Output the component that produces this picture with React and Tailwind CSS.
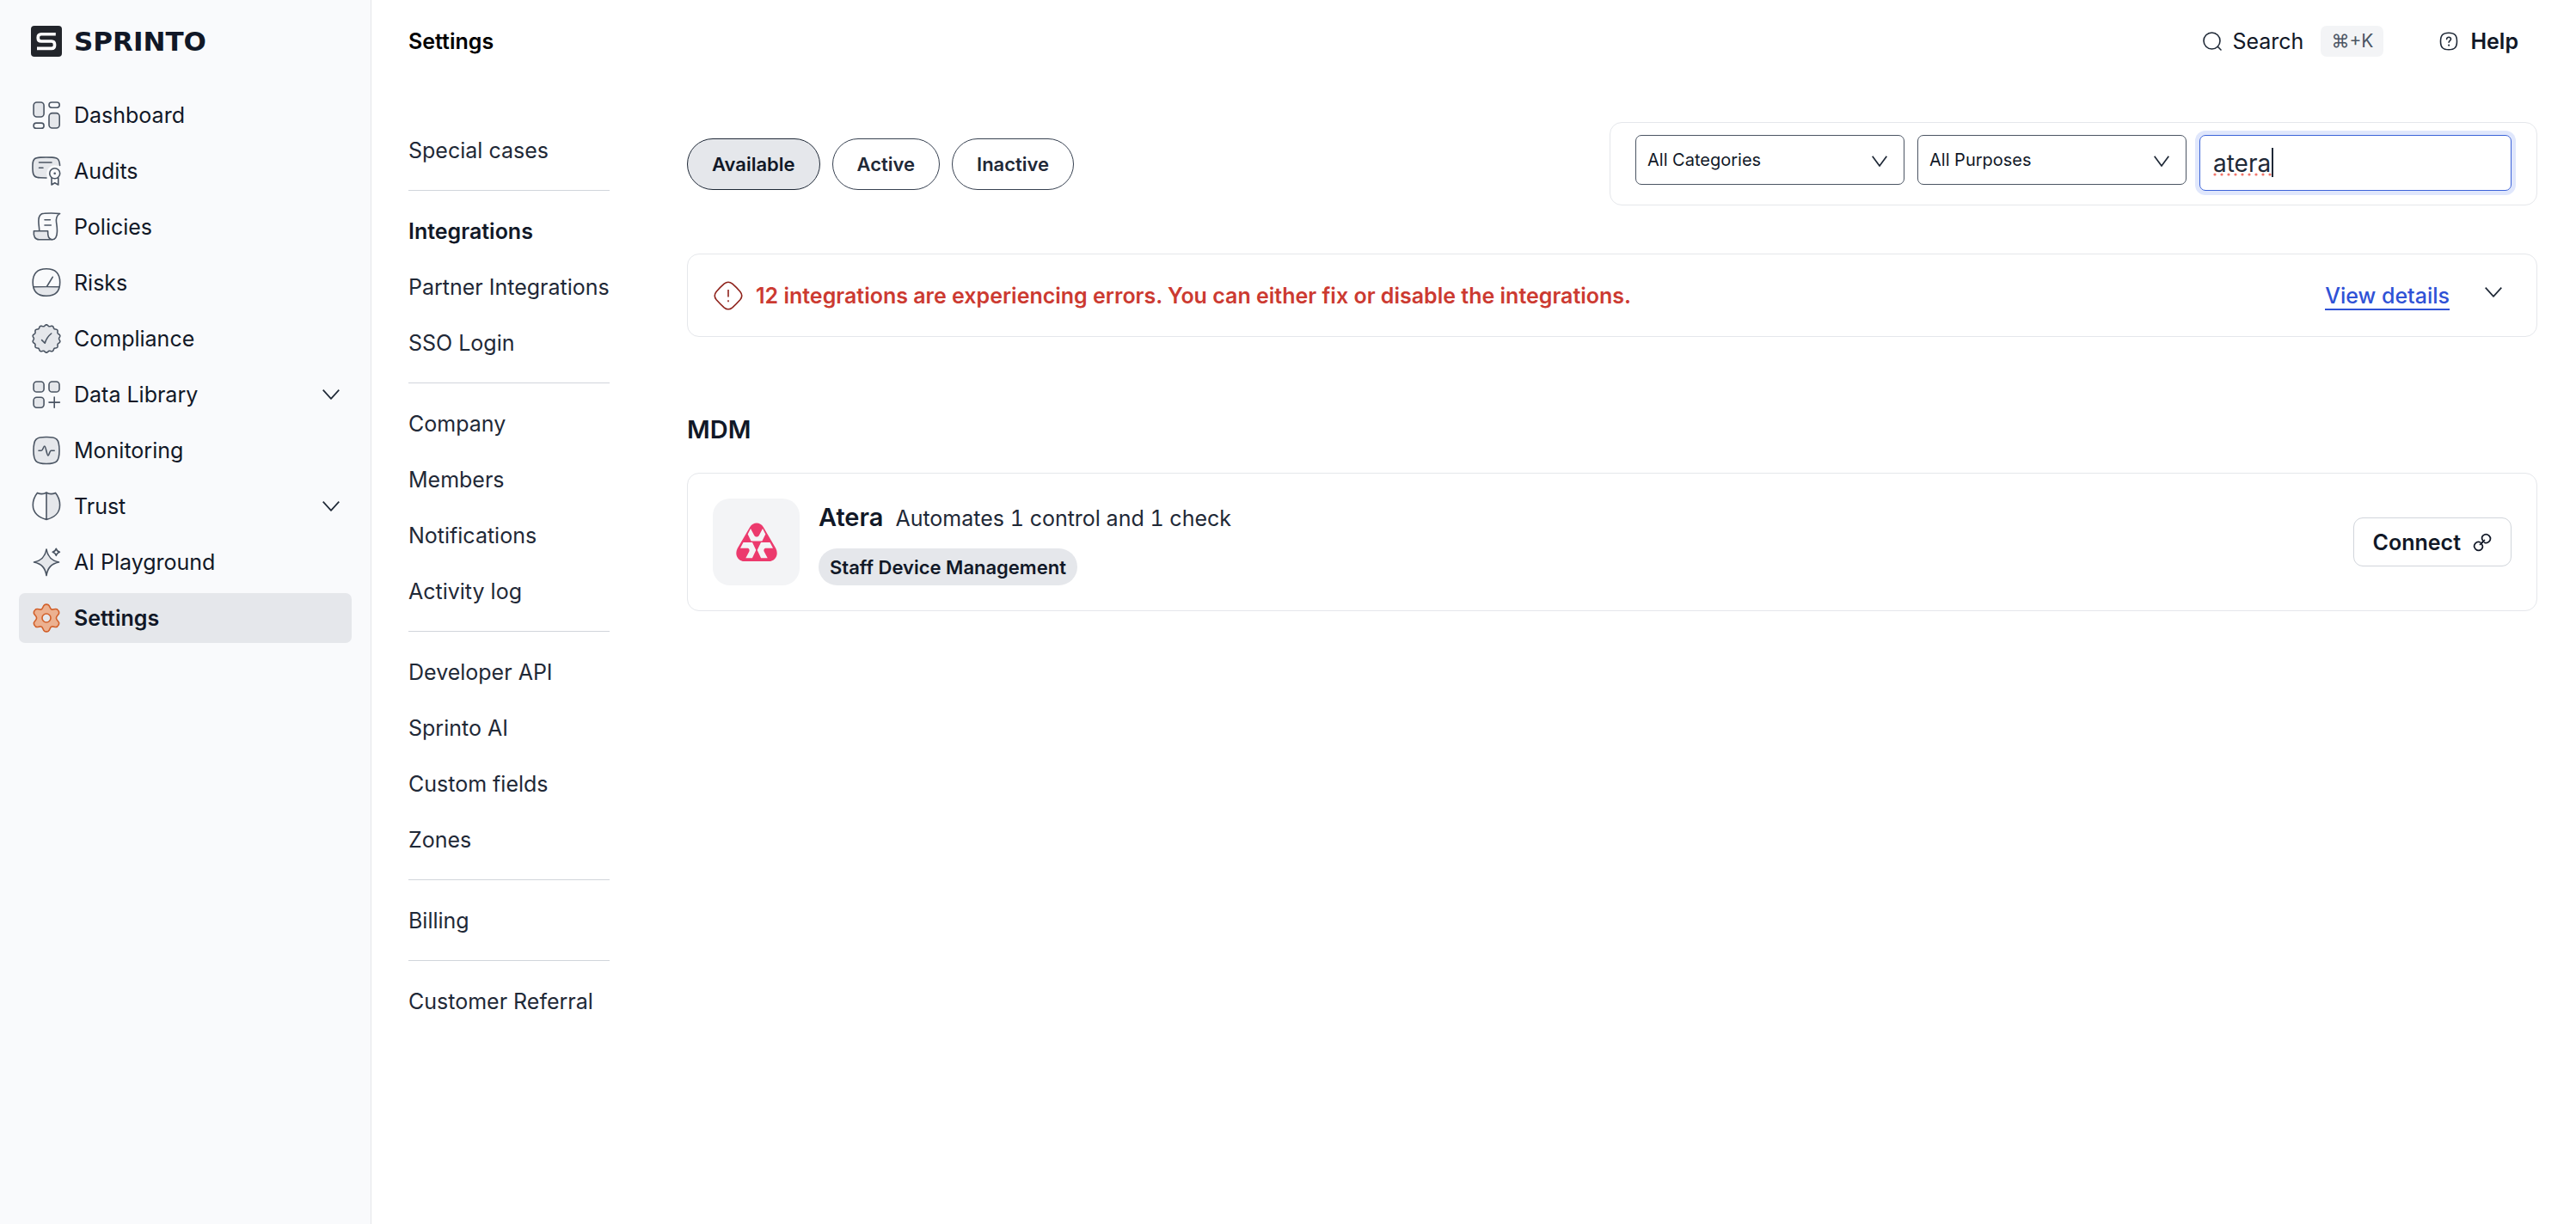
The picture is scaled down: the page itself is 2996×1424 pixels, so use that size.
import { useState } from "react";

const LINE = "#4b5563";
const TINT = "#e5e7eb";

// closed wavy outline around (18, 18)
function wave(lobes, radius, depth) {
  const points = [];
  for (let i = 0; i < 180; i++) {
    const a = (i / 180) * Math.PI * 2;
    const r = radius + depth * Math.cos(lobes * a);
    points.push(`${(18 + r * Math.sin(a)).toFixed(2)},${(18 - r * Math.cos(a)).toFixed(2)}`);
  }
  return `M${points.join("L")}Z`;
}

function Icon({ children, stroke = LINE }) {
  return (
    <svg viewBox="0 0 36 36" className="size-9 shrink-0" fill="none" stroke={stroke} strokeWidth="1.6" strokeLinecap="round" strokeLinejoin="round" aria-hidden="true">
      {children}
    </svg>
  );
}

const DashboardIcon = () => (
  <Icon>
    <rect x="3.1" y="3" width="12" height="17" rx="3.8" fill={TINT} />
    <rect x="3.1" y="27.1" width="12" height="6.2" rx="3.1" />
    <rect x="21" y="3" width="12.2" height="6.2" rx="3.1" />
    <rect x="21" y="15.6" width="12.2" height="17.4" rx="3.8" fill={TINT} />
  </Icon>
);

const AuditsIcon = () => (
  <Icon>
    <path d="M33.6 11.5C33 4.5 31.5 2.3 24.5 2.1C20 1.9 15.5 1.9 11 2.1C4 2.4 2.2 4.5 2 10.5C1.9 13 1.9 15 2.1 17.5C2.4 23.5 4.5 25.6 11 25.8L18 26L20.5 20L26 13Z" fill={TINT} stroke="none" />
    <path d="M33.6 11.5C33 4.5 31.5 2.3 24.5 2.1C20 1.9 15.5 1.9 11 2.1C4 2.4 2.2 4.5 2 10.5C1.9 13 1.9 15 2.1 17.5C2.4 23.5 4.5 25.6 11 25.8L18 26" />
    <path d="M9.5 8H24M9.5 14.3H14" />
    <circle cx="27.7" cy="20.7" r="9.5" fill="#f9fafc" stroke="none" />
    <circle cx="27.7" cy="20.7" r="6" />
    <circle cx="27.7" cy="20.7" r="1.3" fill={LINE} stroke="none" />
    <path d="M24 26V34L27.7 31.8L31.8 34V26" />
  </Icon>
);

const PoliciesIcon = () => (
  <Icon>
    <path d="M3.4 22.7H19.6C19.6 28 20 32.4 24.6 32.7H9.5C5 32.7 2.6 29.5 3.4 22.7Z" fill={TINT} />
    <path d="M9.7 22C9.7 18 8.9 16 8.9 11.5C8.9 5 11 2.3 15.5 2.3C21 1.9 28 1.9 33.6 2.6C30.2 4.3 29.4 7 29.4 10.5C29.4 14 30.8 17.5 30.4 24C30.2 30 28.5 32.7 24.6 32.7" />
    <path d="M16 9.7H22.4M16 16H23.3" />
  </Icon>
);

const RisksIcon = () => (
  <Icon>
    <path d="M3 22.8C13 22.4 23 22.4 33 22.8C31 30 26 33.3 18 33.3C10 33.3 5 30 3 22.8Z" fill={TINT} stroke="none" />
    <path d="M18 1.8C28.5 1.8 33.7 7 33.7 17.5C33.7 28 28.5 33.3 18 33.3C7.5 33.3 2.2 28 2.2 17.5C2.2 7 7.5 1.8 18 1.8Z" />
    <path d="M3 22.8C13 22.4 23 22.4 33 22.8M18.7 22L25.2 11.3" />
  </Icon>
);

const ComplianceIcon = () => (
  <Icon>
    <path d={wave(14, 15.4, 0.8)} fill={TINT} />
    <path d="M12.6 19.6L16.2 23.2C17.5 19 20 15 23.7 12" />
  </Icon>
);

const LibraryIcon = () => (
  <Icon>
    <rect x="3.1" y="3" width="12" height="12" rx="3.6" fill={TINT} />
    <rect x="21" y="3" width="12" height="12" rx="3.6" fill={TINT} />
    <rect x="3.1" y="21.2" width="12" height="12" rx="3.6" fill={TINT} />
    <path d="M27.2 21V33.2M21 27.1H33.4" />
  </Icon>
);

const MonitoringIcon = () => (
  <Icon>
    <path d="M18 2.5C30 2.3 33 4.5 33 18C33 31 30 33.5 18 33.5C6 33.5 3 31 3 18C3 4.5 6 2.3 18 2.5Z" fill={TINT} />
    <path d="M9 18.3H12C14 18.3 14.5 13 15.8 13C17.5 13 18.3 24 20 24C21.3 24 21.5 18.3 23.5 18.3H27.2" />
  </Icon>
);

const TrustIcon = () => (
  <Icon>
    <path d="M18 2C21 4 25 4 28.6 2.4C31.5 6 33.6 10.5 33.6 16.5C33.6 26 26.5 31.5 18 33.4Z" fill={TINT} stroke="none" />
    <path d="M18 2C21 4 25 4 28.6 2.4C31.5 6 33.6 10.5 33.6 16.5C33.6 26 26.5 31.5 18 33.4C9.5 31.5 2.3 26 2.3 16.5C2.3 10.5 4.5 6 7.4 2.4C11 4 15 4 18 2ZM18 2V33.4" />
  </Icon>
);

const PlaygroundIcon = () => (
  <Icon>
    <path d="M18 3C19.5 11.5 23.5 16 32.5 18C23.5 20 19.5 24.5 18 33.5C16.5 24.5 12.5 20 3.5 18C12.5 16 16.5 11.5 18 3Z" fill={TINT} />
    <path d="M29.3 2.2C29.9 4.4 31.2 5.7 33.4 6.3C31.2 6.9 29.9 8.2 29.3 10.4C28.7 8.2 27.4 6.9 25.2 6.3C27.4 5.7 28.7 4.4 29.3 2.2Z" />
  </Icon>
);

const SettingsIcon = () => (
  <Icon stroke="#d2602a">
    <path d="M15.6 2.8C17 2 19 2 20.4 2.8C22.2 4 21.8 7 24 7.9C26 8.8 28.6 6.6 30.6 8C31.8 9 32.8 10.8 32.7 12.2C32.4 14.4 29.4 15.5 29.4 18C29.4 20.5 32.4 21.6 32.7 23.8C32.8 25.2 31.8 27 30.6 28C28.6 29.4 26 27.2 24 28.1C21.8 29 22.2 32 20.4 33.2C19 34 17 34 15.6 33.2C13.8 32 14.2 29 12 28.1C10 27.2 7.4 29.4 5.4 28C4.2 27 3.2 25.2 3.3 23.8C3.6 21.6 6.6 20.5 6.6 18C6.6 15.5 3.6 14.4 3.3 12.2C3.2 10.8 4.2 9 5.4 8C7.4 6.6 10 8.8 12 7.9C14.2 7 13.8 4 15.6 2.8Z" fill="#ecb190" />
    <circle cx="18" cy="18" r="5" fill="#e5e7eb" />
  </Icon>
);

function Chevron({ className }) {
  return (
    <svg viewBox="0 0 20 12" className={className} fill="none" stroke="#1f2937" strokeWidth="1.7" strokeLinejoin="round" aria-hidden="true">
      <path d="M0.7 0.7L10 10.8L19.3 0.7" />
    </svg>
  );
}

const mainNav = [
  { label: "Dashboard", icon: DashboardIcon },
  { label: "Audits", icon: AuditsIcon },
  { label: "Policies", icon: PoliciesIcon },
  { label: "Risks", icon: RisksIcon },
  { label: "Compliance", icon: ComplianceIcon },
  { label: "Data Library", icon: LibraryIcon, expandable: true },
  { label: "Monitoring", icon: MonitoringIcon },
  { label: "Trust", icon: TrustIcon, expandable: true },
  { label: "AI Playground", icon: PlaygroundIcon },
  { label: "Settings", icon: SettingsIcon, active: true },
];

const settingsNav = [
  ["Special cases"],
  ["Integrations", "Partner Integrations", "SSO Login"],
  ["Company", "Members", "Notifications", "Activity log"],
  ["Developer API", "Sprinto AI", "Custom fields", "Zones"],
  ["Billing"],
  ["Customer Referral"],
];

function Sidebar() {
  return (
    <aside className="w-[432px] shrink-0 border-r border-[#e4e5e9] bg-[#f9fafc] px-[22px] pt-[30px]">
      <a href="#" className="flex h-9 items-center gap-[14px] pl-[14px]">
        <svg viewBox="0 0 36 36" className="size-9 shrink-0" aria-hidden="true">
          <rect width="36" height="36" rx="4" fill="#22252b" />
          <path d="M28.8 9.8H12Q8.2 9.8 8.2 13.9Q8.2 18 12 18H24Q27.6 18 27.6 22.2Q27.6 26.4 24 26.4H7" fill="none" stroke="#fff" strokeWidth="3.6" />
        </svg>
        <span className="font-['DejaVu_Sans',sans-serif] text-[31px] leading-9 font-bold text-[#111827]">SPRINTO</span>
      </a>
      <nav className="mt-[39px] flex flex-col gap-[7px]">
        {mainNav.map(({ label, icon: NavIcon, expandable, active }) => (
          <a
            key={label}
            href="#"
            className={
              active
                ? "flex h-[58px] items-center gap-[14px] rounded-[7px] bg-[#e5e7eb] px-[14px] font-semibold text-[#111827]"
                : "flex h-[58px] items-center gap-[14px] rounded-[7px] px-[14px] text-[#111827]"
            }
          >
            <NavIcon />
            <span className="flex-1">{label}</span>
            {expandable && <Chevron className="h-3 w-5" />}
          </a>
        ))}
      </nav>
    </aside>
  );
}

function Header() {
  return (
    <header className="flex h-24 items-center justify-between pr-[67px] pl-[43px]">
      <h1 className="font-semibold text-black">Settings</h1>
      <div className="flex items-center text-[#111827]">
        <button type="button" className="flex items-center">
          <svg viewBox="0 0 22 22" className="mr-3 size-[22px]" fill="none" stroke="#1f2937" strokeWidth="1.6" strokeLinecap="round" aria-hidden="true">
            <circle cx="10.5" cy="10.5" r="9.5" />
            <path d="M17.8 17.8L21 21" />
          </svg>
          Search
          <kbd className="ml-5 flex h-9 items-center rounded-[7px] bg-[#f3f4f6] px-3 font-[Inter,sans-serif] text-[21px] text-[#4b5563]">⌘+K</kbd>
        </button>
        <button type="button" className="ml-[65px] flex items-center gap-[14px] font-semibold">
          <svg viewBox="0 0 22 22" className="size-[22px]" fill="none" stroke="#1f2937" strokeWidth="1.6" strokeLinecap="round" aria-hidden="true">
            <path d="M11 1.2C18 1.2 20.5 4 20.5 11C20.5 18 18 20.8 11 20.8C4 20.8 1.5 18 1.5 11C1.5 4 4 1.2 11 1.2Z" />
            <path d="M8.6 8.6C8.6 5.4 13.6 5.6 13.5 8.5C13.4 10.5 11.2 10.2 11.1 12.3" />
            <path d="M11.1 15.6V15.7" strokeWidth="2" />
          </svg>
          Help
        </button>
      </div>
    </header>
  );
}

function SettingsMenu() {
  return (
    <nav className="w-[234px] shrink-0 pt-[46px] text-[#1f2937]">
      {settingsNav.map((group, i) => (
        <div key={group[0]}>
          {i > 0 && <hr className="my-[14px] border-[#d1d5db]" />}
          {group.map((label) => (
            <a
              key={label}
              href="#"
              className={
                label === "Integrations"
                  ? "flex h-[65px] items-center font-semibold whitespace-nowrap text-[#111827]"
                  : "flex h-[65px] items-center whitespace-nowrap"
              }
            >
              {label}
            </a>
          ))}
        </div>
      ))}
    </nav>
  );
}

function FilterSelect({ label }) {
  return (
    <div className="relative">
      <select
        aria-label={label}
        className="h-[58px] w-[313px] appearance-none rounded-[7px] border border-[#4b5563] bg-white pr-12 pl-[13px] text-[20px] text-[#111827]"
      >
        <option>{label}</option>
      </select>
      <svg viewBox="0 0 18 13" className="pointer-events-none absolute top-6 right-5 h-[13px] w-[18px]" fill="none" stroke="#1f2937" strokeWidth="1.7" strokeLinejoin="round" aria-hidden="true">
        <path d="M0.7 0.7L9 12L17.3 0.7" />
      </svg>
    </div>
  );
}

function Filters() {
  const [status, setStatus] = useState("Available");
  const [query, setQuery] = useState("atera");
  return (
    <div className="flex items-center justify-between">
      <div className="flex gap-[14px]">
        {["Available", "Active", "Inactive"].map((name) => (
          <button
            key={name}
            type="button"
            onClick={() => setStatus(name)}
            className={
              name === status
                ? "h-[60px] rounded-full border border-[#1f2937] bg-[#e5e7eb] px-7 text-[22px] font-semibold text-[#111827]"
                : "h-[60px] rounded-full border border-[#374151] bg-white px-7 text-[22px] font-semibold text-[#1f2937]"
            }
          >
            {name}
          </button>
        ))}
      </div>
      <div className="flex h-[97px] items-start gap-[15px] rounded-[14px] border border-[#e5e7eb] px-[29px] pt-[14px]">
        <FilterSelect label="All Categories" />
        <FilterSelect label="All Purposes" />
        <div className="relative">
          <input
            type="text"
            aria-label="Search integrations"
            value={query}
            onChange={(e) => setQuery(e.target.value)}
            className="h-[65px] w-[363px] rounded-[7px] border border-[#3b63d9] px-[15px] text-[28px] text-[#1f2937] caret-transparent ring-5 ring-[#e0e7fc] outline-none"
          />
          {/* spelling mark and caret */}
          <svg viewBox="0 0 72 34" className="pointer-events-none absolute top-[15px] left-4 h-[34px] w-[72px]" aria-hidden="true">
            {[2, 10, 18, 26, 34, 42, 50, 58, 66].map((x) => (
              <circle key={x} cx={x} cy="31" r="1.6" fill="#f2766b" />
            ))}
            <rect x="68" width="2" height="34" fill="#1f2937" />
          </svg>
        </div>
      </div>
    </div>
  );
}

function ErrorBanner() {
  return (
    <section className="mt-14 flex h-[97px] items-center rounded-[14px] border border-[#e5e7eb] px-[29px]">
      <svg viewBox="0 0 36 36" className="mr-[14px] size-9" fill="none" stroke="#8f231c" strokeWidth="1.6" strokeLinejoin="round" aria-hidden="true">
        <path d="M13.2 4.2C16.5 1.5 19.5 1.5 22.8 4.2C26 7 29 10 31.8 13.2C34.5 16.5 34.5 19.5 31.8 22.8C29 26 26 29 22.8 31.8C19.5 34.5 16.5 34.5 13.2 31.8C10 29 7 26 4.2 22.8C1.5 19.5 1.5 16.5 4.2 13.2C7 10 10 7 13.2 4.2Z" />
        <path d="M18 11V19.5M18 23.3V25.2" />
      </svg>
      <p className="font-semibold text-[#cc3a31]">
        12 integrations are experiencing errors. You can either fix or disable the integrations.
      </p>
      <a href="#" className="mt-0.5 ml-auto border-b-2 border-[#2f52d6] font-medium text-[#2f52d6]">
        View details
      </a>
      <button type="button" aria-label="Expand" className="mr-[11px] mb-2 ml-[41px]">
        <Chevron className="h-3 w-5" />
      </button>
    </section>
  );
}

function AteraLogo() {
  return (
    <div className="flex size-[101px] items-center justify-center rounded-[20px] bg-[#f3f4f6]">
      <svg viewBox="0 0 48 46" className="h-[46px] w-12" role="img" aria-label="Atera">
        <path d="M16.3 5C19.8 -1 28.2 -1 31.7 5L46.3 30C50 37 46 45 38 45H10C2 45 -2 37 1.7 30Z" fill="#ec3a6d" />
        <g fill="#f3f4f6">
          <path d="M17 7L13.7 13.5L17.6 21.5H30.4L34.3 13.5L31 7L26.6 15.2C25.4 17 22.6 17 21.4 15.2Z" />
          <path d="M8.5 23H19L23.3 32L18.9 41.3H11.3L15.4 33.6C16 32 15.400 30 13.800 29.700H5Z" />
          <path d="M39.500 23H29L24.700 32L29.100 41.300H36.700L32.600 33.600C32 32 32.600 30 34.200 29.700H43Z" />
        </g>
      </svg>
    </div>
  );
}

function IntegrationCard() {
  return (
    <article className="mt-8 flex items-center rounded-[14px] border border-[#e5e7eb] p-[29px]">
      <AteraLogo />
      <div className="ml-[22px] flex h-[101px] flex-col items-start justify-between">
        <div className="flex items-baseline gap-[14px]">
          <h3 className="text-[29px] leading-[43px] font-semibold text-[#111827]">Atera</h3>
          <p className="text-[#1f2937] tabular-nums">Automates 1 control and 1 check</p>
        </div>
        <span className="flex h-[43px] items-center rounded-full bg-[#e5e7eb] px-[13px] text-[22px] font-semibold text-[#111827]">
          Staff Device Management
        </span>
      </div>
      <button type="button" className="ml-auto flex h-[57px] items-center gap-[14px] rounded-[11px] border border-[#d1d5db] px-[22px] font-semibold text-[#111827]">
        Connect
        <svg viewBox="0 0 22 22" className="size-[22px]" fill="none" stroke="#111827" strokeWidth="1.7" strokeLinecap="round" aria-hidden="true">
          <path d="M8.500 13.500L12.300 9.700C10 7 10 5 11.800 3.200C14.200 0.900 16.400 0.900 18.800 3.200C21.100 5.600 21.100 7.800 18.800 10.200C17 12 15.600 12.200 13.600 11.200" />
          <path d="M13.500 8.500L9.700 12.300C12 15 12 17 10.200 18.800C7.800 21.100 5.600 21.100 3.200 18.800C0.900 16.400 0.900 14.200 3.200 11.800C5 10 6.400 9.800 8.400 10.800" />
        </svg>
      </button>
    </article>
  );
}

export default function App() {
  return (
    <div className="flex min-h-screen bg-white font-[Inter,sans-serif] text-[25px] leading-[30px]">
      <Sidebar />
      <div className="min-w-0 flex-1">
        <Header />
        <div className="flex gap-[90px] pr-[45px] pl-[43px]">
          <SettingsMenu />
          <main className="min-w-0 flex-1 pt-[46px]">
            <Filters />
            <ErrorBanner />
            <h2 className="mt-[90px] text-[29px] leading-9 font-semibold text-[#111827]">MDM</h2>
            <IntegrationCard />
          </main>
        </div>
      </div>
    </div>
  );
}
